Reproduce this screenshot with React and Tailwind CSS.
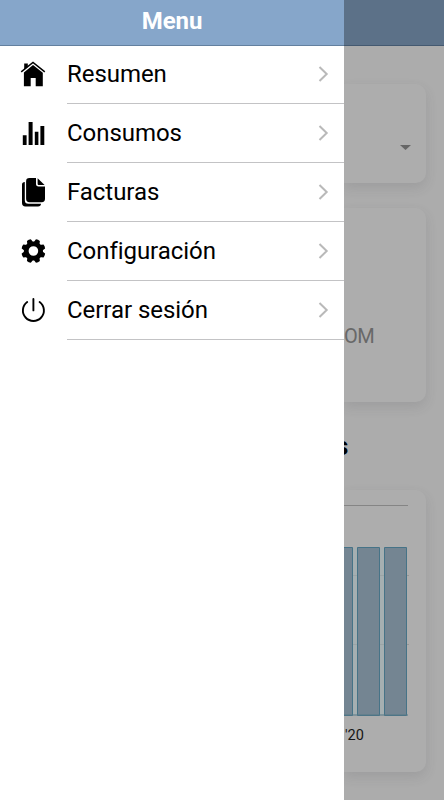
import React from "react";

function HomeIcon() {
  return (
    <svg width="26" height="26" viewBox="0 0 26 26" fill="#000">
      <path d="M13 3.9 22.8 11.8V25.2H15.7V17H10.7V25.2H3.9V11.5z" />
      <path d="M4.2 2.4h3.6v3.4L4.2 8.6z" />
      <path d="M1.2 10.9 13 1.4 24.8 10.9" fill="none" stroke="#000" strokeWidth="1.5" />
    </svg>
  );
}

function StatsIcon() {
  return (
    <svg width="26" height="26" viewBox="0 0 26 26" fill="#000">
      <path d="M2.8 15.3h3.8v9.7H2.8zM8.6 2h4v23h-4zM14.8 11.8h3.6V25h-3.6zM20.4 6h3.9v19h-3.9z" />
    </svg>
  );
}

function DocumentsIcon() {
  return (
    <svg width="26" height="30" viewBox="0 0 26 30" fill="#000">
      <path d="M4.8 5C3 5 2 6 2 7.8V26c0 2.2 1.2 3.4 3.4 3.4H18c2 0 3-1 3-2.6H8.4c-2.4 0-3.6-1.2-3.6-3.6z" />
      <path d="M9.5 1H16v5.8c0 1.7.8 2.6 2.6 2.6H25v12.4c0 2.4-1 3.4-3.3 3.4H9.5c-2.3 0-3.4-1-3.4-3.4V4.4C6.1 2 7.2 1 9.5 1z" />
      <path d="M17.6 1.3 24.6 8h-5.5c-1 0-1.5-.5-1.5-1.5z" />
    </svg>
  );
}

function GearIcon() {
  return (
    <svg width="26" height="26" viewBox="-0.4 0 26 26">
      <circle cx="13" cy="13" r="7.2" fill="none" stroke="#000" strokeWidth="4.8" />
      {[22.5, 67.5, 112.5, 157.5, 202.5, 247.5, 292.5, 337.5].map((angle) => (
        <path key={angle} d="M9.8 5.2 10.9 1.2Q13 .5 15.1 1.2L16.2 5.2z" transform={`rotate(${angle} 13 13)`} />
      ))}
    </svg>
  );
}

function PowerIcon() {
  return (
    <svg width="26" height="26" viewBox="-0.2 0 26 26" fill="none" stroke="#000" strokeWidth="1.9" strokeLinecap="round">
      <path d="M13.2 2v11.4M7 5a10.5 10.5 0 1 0 12.4 0" />
    </svg>
  );
}

const items = [
  { label: "Resumen", Icon: HomeIcon },
  { label: "Consumos", Icon: StatsIcon },
  { label: "Facturas", Icon: DocumentsIcon },
  { label: "Configuración", Icon: GearIcon },
  { label: "Cerrar sesión", Icon: PowerIcon },
];

function MenuItem({ label, Icon }) {
  return (
    <li className="flex h-[59px] items-stretch">
      <div className="flex w-[67px] shrink-0 items-center pb-px pl-5">
        <Icon />
      </div>
      <div className="flex flex-1 items-center justify-between border-b border-[#c3c3c5] pr-[13px]">
        <span className="text-[24px] leading-[30px] tracking-[-0.05px]">{label}</span>
        <svg width="14" height="18" viewBox="0 0 14 18" fill="none" stroke="#b9b9b9" strokeWidth="2">
          <path d="M2.5 2 9.7 9 2.5 16" />
        </svg>
      </div>
    </li>
  );
}

function Drawer() {
  return (
    <aside className="flex w-[344px] shrink-0 flex-col bg-white">
      <header className="h-[46px] border-b border-[#63809f] bg-[#86a6ca] text-center text-[24px] leading-[42px] font-bold tracking-[-0.1px] text-white">
        Menu
      </header>
      <ul className="-mt-px">
        {items.map((item) => (
          <MenuItem key={item.label} {...item} />
        ))}
      </ul>
    </aside>
  );
}

const cardClass =
  "mr-[18px] rounded-r-[10px] bg-[#adadad] shadow-[0_5px_12px_rgba(70,70,80,0.14)]";

function Chart() {
  return (
    <svg width="82" height="282" viewBox="0 0 82 282">
      <path d="M0 15.5H64" stroke="#858585" />
      <path d="M0 85.5H65M0 154.5H65" stroke="#969696" />
      <g fill="#748592" stroke="#467387">
        <path d="M-14.5 57.5H8.5V225.5H-14.5z" />
        <path d="M13.5 57.5H35.5V225.5H13.5z" />
        <path d="M40.5 57.5H62.5V225.5H40.5z" />
      </g>
      <path d="M9 58H13V225H9zM36 58H40V225H36z" fill="#9fb0b5" fillOpacity="0.55" />
      <path d="M0 225H64" stroke="#557887" />
      <text x="1" y="249.5" fill="#151515" fontFamily="Roboto, sans-serif" fontSize="14.5">
        '20
      </text>
    </svg>
  );
}

function Dashboard() {
  return (
    <main className="flex w-[100px] flex-col overflow-hidden bg-[#acacac]">
      <div className="h-[46px] shrink-0 border-b border-[#445970] bg-[#5c7188]" />
      <section className={`${cardClass} mt-[38px] flex h-[99px] shrink-0 items-end justify-end pr-[15px] pb-[33px]`}>
        <svg width="11" height="5" viewBox="0 0 11 5" fill="#666">
          <path d="M0 0h11L5.5 5z" />
        </svg>
      </section>
      <section className={`${cardClass} mt-[25px] h-[194px] shrink-0 pt-[114px] text-[20px] leading-[28px] tracking-[-0.4px] text-[#686868]`}>
        OM
      </section>
      <h2 className="mt-[27px] -ml-[9px] h-[61px] shrink-0 text-[26px] leading-[34px] font-bold text-black">s</h2>
      <section className={`${cardClass} h-[282px] shrink-0`}>
        <Chart />
      </section>
    </main>
  );
}

export default function App() {
  return (
    <div className="flex h-[800px] w-[444px] overflow-hidden font-[Roboto,sans-serif] text-black">
      <Drawer />
      <Dashboard />
    </div>
  );
}
